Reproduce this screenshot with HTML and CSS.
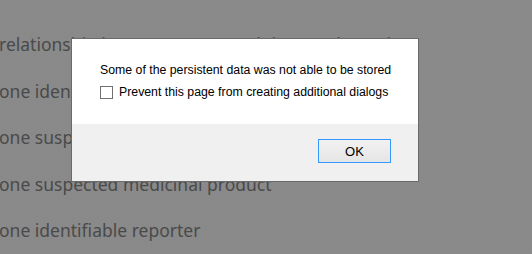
FILE: index.html
```html
<!DOCTYPE html>
<html lang="en">
<head>
<meta charset="utf-8">
<title>Dialog</title>
<link rel="stylesheet" href="styles.css">
</head>
<body>
<div class="page">
  <p class="line">relationship between suspected drug and reaction</p>
  <p class="line">one identifiable patient</p>
  <p class="line">one suspected adverse reaction</p>
  <p class="line">one suspected medicinal product</p>
  <p class="line">one identifiable reporter</p>
</div>
<div class="dialog" role="dialog">
  <div class="dialog-body">
    <div class="message">Some of the persistent data was not able to be stored</div>
    <label class="check-row"><span class="checkbox"></span><span>Prevent this page from creating additional dialogs</span></label>
  </div>
  <div class="dialog-footer">
    <button class="ok-btn" type="button">OK</button>
  </div>
</div>
</body>
</html>
```

FILE: styles.css
```css
html, body {
  margin: 0;
  padding: 0;
  width: 532px;
  height: 254px;
  overflow: hidden;
}
body {
  background-color: #8a8a8a;
  background-image: repeating-conic-gradient(#8c8c8c 0 25%, #878787 0 50%);
  background-size: 2px 2px;
  position: relative;
}
.page {
  padding-top: 21px;
  margin-left: -1px;
  font-family: "Noto Sans", "Open Sans", sans-serif;
  font-size: 17.5px;
  color: #4a4a4a;
}
.line {
  margin: 0;
  line-height: 46.6px;
  white-space: nowrap;
}
.dialog {
  position: absolute;
  left: 71px;
  top: 38px;
  width: 346px;
  height: 142px;
  border: 1px solid #6a6a6a;
  display: flex;
  flex-direction: column;
  font-family: "Liberation Sans", Arial, sans-serif;
  font-size: 12.3px;
  color: #000;
}
.dialog-body {
  background: #ffffff;
  height: 85px;
  box-sizing: border-box;
  padding: 23px 0 0 28px;
  display: flex;
  flex-direction: column;
  gap: 6px;
}
.message {
  line-height: 16px;
}
.check-row {
  display: flex;
  align-items: center;
  gap: 6px;
  line-height: 16px;
  height: 16px;
}
.checkbox {
  width: 11px;
  height: 11px;
  border: 1px solid #707070;
  background: #fff;
  flex: none;
  margin-top: 1px;
}
.dialog-footer {
  flex: 1;
  background: #f0f0f0;
  display: flex;
  justify-content: flex-end;
  align-items: flex-start;
  padding: 15px 27px 0 0;
}
.ok-btn {
  width: 73px;
  height: 24px;
  border: 1px solid #3399ff;
  background: linear-gradient(#f2f2f2, #e5e5e5);
  font-family: "Liberation Sans", Arial, sans-serif;
  font-size: 13px;
  color: #000;
  padding: 0;
  margin: 0;
  border-radius: 0;
}
```
